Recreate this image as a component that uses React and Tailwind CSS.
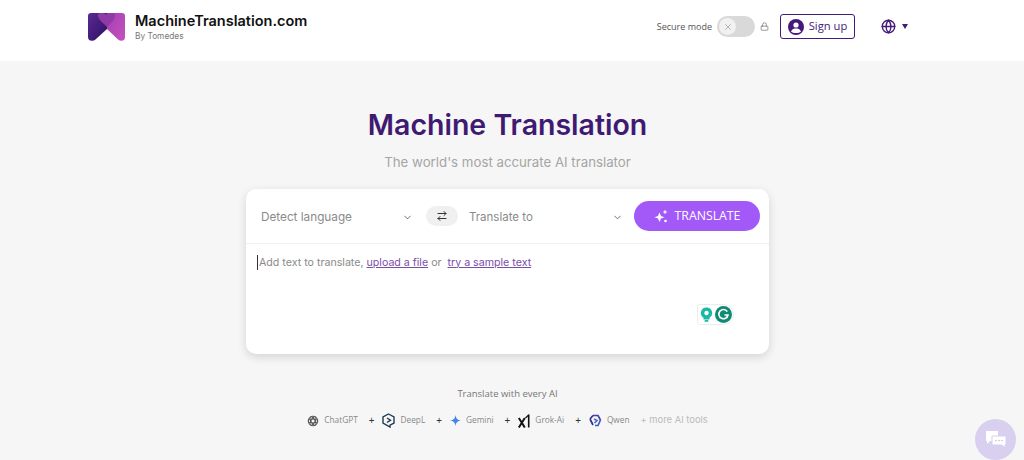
import React from "react";
import { ChevronDown, Globe, Lock, X, ArrowRightLeft } from "lucide-react";

const poppins = "font-['Inter','Noto_Sans',sans-serif]";
const openSans = "font-['Open_Sans',sans-serif]";

function Logo() {
  return (
    <svg width="37" height="28" viewBox="0 0 37 28">
      <defs>
        <linearGradient id="logoLeft" x1="0" y1="0" x2="1" y2="1">
          <stop offset="0" stopColor="#5a2a96" />
          <stop offset="1" stopColor="#2c1060" />
        </linearGradient>
        <linearGradient id="logoRight" x1="0" y1="0" x2="1" y2="1">
          <stop offset="0" stopColor="#a53fb5" />
          <stop offset="1" stopColor="#c553bd" />
        </linearGradient>
      </defs>
      <path d="M3 0H19V16L7.500 26.500C5 28.500 0 28.500 0 24V3C0 1 1 0 3 0Z" fill="url(#logoLeft)" />
      <path d="M19 0H34C36 0 37 1 37 3V24C37 28 33 29 30 26.500L19 16Z" fill="url(#logoRight)" />
      <path d="M10 1C12 -0.500 16 -0.500 18.500 1.500C21 -0.500 25 -0.500 27 1C28 6 23 10 19 14C15 10 9 6 10 1Z" fill="#8f3aa6" />
    </svg>
  );
}

function SignupIcon() {
  return (
    <svg width="16" height="16" viewBox="0 0 16 16">
      <circle cx="8" cy="8" r="8" fill="#45197a" />
      <circle cx="8" cy="6" r="2.600" fill="#fff" />
      <path d="M3 12.500C4 10 6 9.500 8 9.500C10 9.500 12 10 13 12.500C11 14.500 5 14.500 3 12.500Z" fill="#fff" />
    </svg>
  );
}

function Sparkles() {
  return (
    <svg width="14" height="14" viewBox="0 0 14 14" fill="#fff">
      <path d="M5.500 3.500L7 7L10.500 8.200L7 9.500L5.500 13L4 9.500L0.500 8.200L4 7Z" />
      <path d="M11 0.500L11.700 2.300L13.500 3L11.700 3.700L11 5.500L10.300 3.700L8.500 3L10.300 2.300Z" />
      <circle cx="11.500" cy="12" r="1.300" />
    </svg>
  );
}

function Grammarly() {
  return (
    <div className="flex items-center gap-[2px] h-[21px] w-[37px] bg-white rounded-tr-[11px] rounded-br-[11px] rounded-l-[3px] border border-[#e8eeee] pl-[2px]">
      <svg width="13" height="15" viewBox="0 0 13 15">
        <path d="M6.500 0.500A5.500 5.500 0 0 1 9.500 10.700V12.500H3.500V10.700A5.500 5.500 0 0 1 6.500 0.500Z" fill="#1cb8a6" />
        <circle cx="6.500" cy="6" r="2.200" fill="#fff" />
        <rect x="4.500" y="13" width="4" height="1.800" rx="0.900" fill="#1cb8a6" />
      </svg>
      <svg width="17" height="17" viewBox="0 0 17 17">
        <circle cx="8.500" cy="8.500" r="8.500" fill="#0f8a73" />
        <path d="M12.300 5.600A4.600 4.600 0 1 0 13 9H9.500" fill="none" stroke="#fff" strokeWidth="1.600" />
      </svg>
    </div>
  );
}

function ChatGptIcon() {
  return (
    <svg width="12" height="12" viewBox="0 0 12 12" fill="none" stroke="#555" strokeWidth="1">
      <circle cx="6" cy="6" r="4.800" />
      <ellipse cx="6" cy="6" rx="4.800" ry="2" transform="rotate(60 6 6)" />
      <ellipse cx="6" cy="6" rx="4.800" ry="2" transform="rotate(-60 6 6)" />
      <ellipse cx="6" cy="6" rx="4.800" ry="2" />
    </svg>
  );
}

function DeeplIcon() {
  return (
    <svg width="13" height="15" viewBox="0 0 13 15" fill="none" stroke="#1f3a52" strokeWidth="1.400">
      <path d="M6.500 1L12 4V10L8 12.200V14L1 10V4Z" />
      <path d="M5 5L8.500 7.200L5 9.500" />
    </svg>
  );
}

function GeminiIcon() {
  return (
    <svg width="11" height="11" viewBox="0 0 11 11">
      <path d="M5.500 0C6 3.500 7.500 5 11 5.500C7.500 6 6 7.500 5.500 11C5 7.500 3.500 6 0 5.500C3.500 5 5 3.500 5.500 0Z" fill="#4285e8" />
    </svg>
  );
}

function GrokIcon() {
  return (
    <svg width="12" height="14" viewBox="0 0 12 14" fill="none" stroke="#111">
      <path d="M0.800 4L6.800 13.500M6.800 4L0.800 13.500" strokeWidth="2" />
      <path d="M10.700 0.500V13.500" strokeWidth="1.600" />
      <path d="M10.700 1L7.500 4" strokeWidth="1.200" />
    </svg>
  );
}

function QwenIcon() {
  return (
    <svg width="13" height="13" viewBox="0 0 13 13" fill="none" strokeWidth="1.700">
      <path d="M4 1.500H9L11.500 6" stroke="#4a3fa8" />
      <path d="M11.500 6L9 11.500H6" stroke="#3d5bc4" />
      <path d="M1 5L4 1.500M1 5L4 11" stroke="#33328a" />
      <path d="M5 5L8 6.500L5.500 9" stroke="#4a6ad0" />
    </svg>
  );
}

function AiTool({ icon, name, last }) {
  return (
    <div className="flex items-center">
      <div className="flex items-center gap-[5px]">
        {icon}
        <span className={`text-[8.300px] text-[#888] ${openSans}`}>{name}</span>
      </div>
      {!last && <span className="text-[10px] text-[#333] ml-[11px] mr-[8px]">+</span>}
    </div>
  );
}

function App() {
  return (
    <div className="relative h-[460px] w-[1024px] overflow-hidden bg-[#f6f6f6]">
      <header className="flex h-[61px] items-center justify-between bg-white pl-[88px] pr-[116px] pb-[8px]">
        <div className="flex items-center gap-[10px]">
          <Logo />
          <div>
            <div className={`text-[14.500px] leading-[18px] font-semibold text-[#111] ${poppins}`}>MachineTranslation.com</div>
            <div className={`text-[8.300px] leading-[11px] mt-[1px] text-[#777] ${poppins}`}>By Tomedes</div>
          </div>
        </div>
        <div className="flex items-center">
          <span className={`text-[9px] text-[#555] ${openSans}`}>Secure mode</span>
          <div className="ml-[5px] flex h-[21px] w-[38px] items-center rounded-full bg-[#d9d9d9] pl-[2px]">
            <div className="flex h-[17px] w-[17px] items-center justify-center rounded-full bg-[#f1f1f1]">
              <X size={10} color="#aaa" />
            </div>
          </div>
          <Lock size={9} color="#777" className="ml-[5px]" />
          <button className="ml-[11px] flex h-[25px] w-[75px] items-center justify-center gap-[5px] rounded-[3px] border border-[#45197a] bg-white">
            <SignupIcon />
            <span className={`text-[11.200px] text-[#45197a] ${openSans}`}>Sign up</span>
          </button>
          <Globe size={15} color="#45197a" strokeWidth={2.200} className="ml-[26px]" />
          <span className="ml-[6px] h-0 w-0 border-x-[3.500px] border-t-[5px] border-x-transparent border-t-[#45197a]" />
        </div>
      </header>

      <main className="flex w-[1015px] flex-col items-center">
        <h1 className={`mt-[44px] text-[28.500px] leading-[40px] font-semibold text-[#3f1a72] ${poppins}`}>Machine Translation</h1>
        <p className={`mt-[7px] text-[13.250px] leading-[20px] text-[#a5a5a5] ${poppins}`}>The world's most accurate AI translator</p>

        <div className="mt-[17px] h-[165px] w-[523px] rounded-[10px] bg-white shadow-[0_3px_10px_rgba(0,0,0,0.14)]">
          <div className="flex h-[55px] items-center border-b border-[#f0f0f0] pl-[15px] pr-[9px]">
            <div className="flex w-[152px] items-center justify-between">
              <span className={`pt-[3px] text-[11.750px] text-[#8a8a8a] ${poppins}`}>Detect language</span>
              <ChevronDown size={11} color="#666" className="mt-[3px]" />
            </div>
            <div className="ml-[13px] flex h-[20px] w-[32px] items-center justify-center rounded-[10px] bg-[#f0f0f0]">
              <ArrowRightLeft size={12} color="#333" strokeWidth={2} />
            </div>
            <div className="ml-[11px] flex w-[154px] items-center justify-between">
              <span className={`pt-[3px] text-[11.500px] text-[#8a8a8a] ${poppins}`}>Translate to</span>
              <ChevronDown size={11} color="#666" className="mt-[3px]" />
            </div>
            <button className="ml-[11px] flex h-[30px] w-[126px] items-center justify-center gap-[7px] rounded-full bg-[#a259f7]">
              <Sparkles />
              <span className={`text-[12.300px] text-white ${openSans}`}>TRANSLATE</span>
            </button>
          </div>
          <div className="relative h-[110px] pl-[11px] pt-[10px]">
            <div className={`flex h-[17px] items-center text-[10.650px] text-[#8a8a8a] ${poppins}`}>
              <span className="mr-[1px] h-[15px] w-px bg-[#333]" />
              <span>Add text to translate,&nbsp;</span>
              <span className="text-[#7a4ea8] underline">upload a file</span>
              <span>&nbsp;or&nbsp;&nbsp;</span>
              <span className="text-[#7a4ea8] underline">try a sample text</span>
            </div>
            <div className="absolute right-[35px] top-[60px]">
              <Grammarly />
            </div>
          </div>
        </div>

        <p className={`mt-[33px] text-[9.500px] leading-[14px] text-[#777] ${openSans}`}>Translate with every AI</p>
        <div className="mt-[12px] flex items-center">
          <AiTool icon={<ChatGptIcon />} name="ChatGPT" />
          <AiTool icon={<DeeplIcon />} name="DeepL" />
          <AiTool icon={<GeminiIcon />} name="Gemini" />
          <AiTool icon={<GrokIcon />} name="Grok-Ai" />
          <AiTool icon={<QwenIcon />} name="Qwen" last />
          <span className={`ml-[11px] text-[9.400px] text-[#bbb] ${poppins}`}>+ more AI tools</span>
        </div>
      </main>

      <div className="absolute left-[975px] top-[419px] flex h-[41px] w-[41px] items-center justify-center rounded-full bg-[#d9cfee]">
        <svg width="22" height="19" viewBox="0 0 22 19">
          <path d="M1 1H13V11H5L2 14V11H1Z" fill="#fff" />
          <path d="M7 6H21V15H20V18L17 15H7Z" fill="#fff" stroke="#d9cfee" />
          <circle cx="11" cy="10.500" r="0.700" fill="#b9aad8" />
          <circle cx="14" cy="10.500" r="0.700" fill="#b9aad8" />
          <circle cx="17" cy="10.500" r="0.700" fill="#b9aad8" />
        </svg>
      </div>
    </div>
  );
}

export default App;
